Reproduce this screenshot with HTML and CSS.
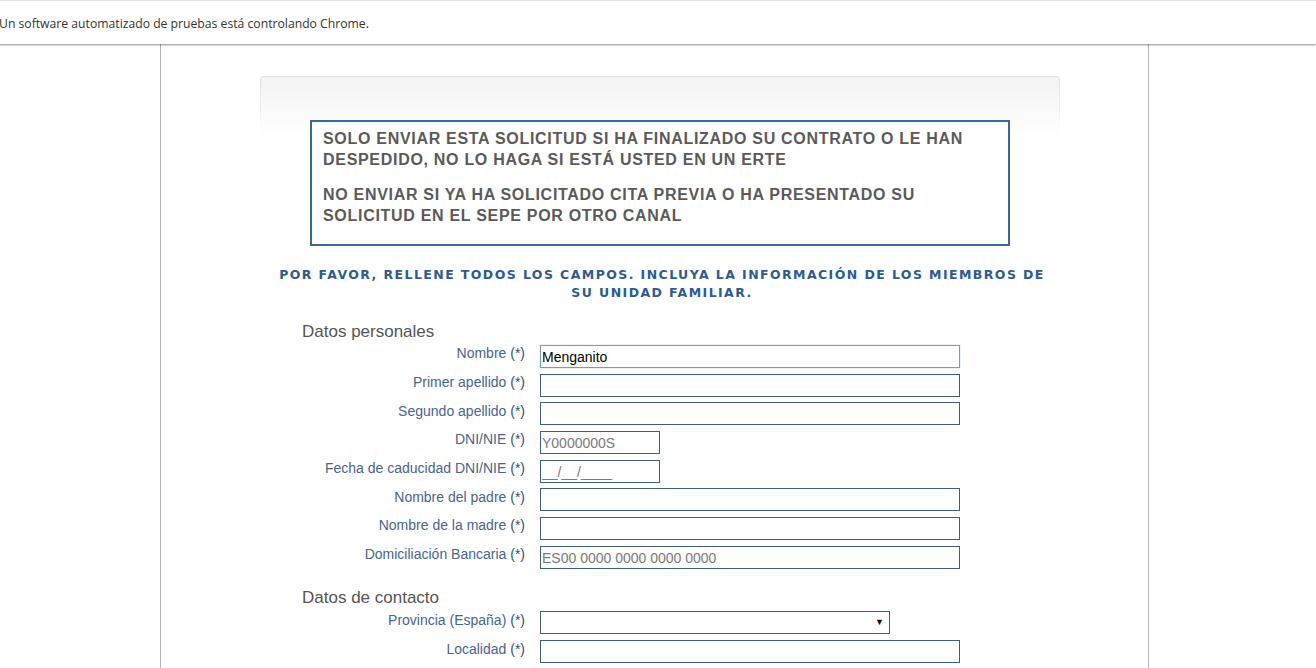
FILE: index.html
```html
<!DOCTYPE html>
<html lang="es">
<head>
<meta charset="utf-8">
<title>Solicitud</title>
<link rel="stylesheet" href="styles.css">
</head>
<body>
<div class="infobar">Un software automatizado de pruebas está controlando Chrome.</div>
<div class="page">
  <div class="panel">
    <div class="warning">
      <p>SOLO ENVIAR ESTA SOLICITUD SI HA FINALIZADO SU CONTRATO O LE HAN DESPEDIDO, NO LO HAGA SI ESTÁ USTED EN UN ERTE</p>
      <p>NO ENVIAR SI YA HA SOLICITADO CITA PREVIA O HA PRESENTADO SU SOLICITUD EN EL SEPE POR OTRO CANAL</p>
    </div>
    <p class="instructions">POR FAVOR, RELLENE TODOS LOS CAMPOS. INCLUYA LA INFORMACIÓN DE LOS MIEMBROS DE SU UNIDAD FAMILIAR.</p>
    <form class="form">
      <h3 class="section">Datos personales</h3>
      <div class="row"><label>Nombre <span class="req">(*)</span></label><input class="field focused" type="text" value="Menganito"></div>
      <div class="row"><label>Primer apellido <span class="req">(*)</span></label><input class="field" type="text"></div>
      <div class="row"><label>Segundo apellido <span class="req">(*)</span></label><input class="field" type="text"></div>
      <div class="row"><label>DNI/NIE <span class="req">(*)</span></label><input class="field short muted" type="text" value="Y0000000S"></div>
      <div class="row"><label>Fecha de caducidad DNI/NIE <span class="req">(*)</span></label><input class="field short muted" type="text" value="__/__/____"></div>
      <div class="row"><label>Nombre del padre <span class="req">(*)</span></label><input class="field" type="text"></div>
      <div class="row"><label>Nombre de la madre <span class="req">(*)</span></label><input class="field" type="text"></div>
      <div class="row"><label>Domiciliación Bancaria <span class="req">(*)</span></label><input class="field muted" type="text" value="ES00 0000 0000 0000 0000"></div>
      <h3 class="section contact">Datos de contacto</h3>
      <div class="row"><label>Provincia (España) <span class="req">(*)</span></label><div class="select"><span class="arrow">▼</span></div></div>
      <div class="row"><label>Localidad <span class="req">(*)</span></label><input class="field" type="text"></div>
    </form>
  </div>
</div>
</body>
</html>
```

FILE: styles.css
```css
html, body {
  margin: 0;
  padding: 0;
  background: #fff;
  overflow: hidden;
}
body {
  font-family: "Liberation Sans", Arial, sans-serif;
  height: 668px;
}
.infobar {
  position: relative;
  z-index: 2;
  height: 44px;
  box-sizing: border-box;
  border-top: 1px solid #e2e2e2;
  background: #fff;
  box-shadow: 0 1px 2px rgba(0,0,0,0.45);
  font-family: "Open Sans", "Noto Sans", sans-serif;
  font-size: 12.2px;
  color: #333;
  line-height: 45px;
  padding-left: 0;
  margin-left: -1px;
  white-space: nowrap;
  overflow: hidden;
}
.page {
  width: 989px;
  margin-left: 160px;
  border-left: 1px solid #b5b5b5;
  border-right: 1px solid #b5b5b5;
  height: 640px;
  padding-top: 32px;
  box-sizing: border-box;
}
.panel {
  width: 800px;
  box-sizing: border-box;
  margin-left: 99px;
  border: 1px solid transparent;
  border-bottom: none;
  border-radius: 4px 4px 0 0;
  background:
    linear-gradient(#f3f3f3, #ffffff 62px) padding-box,
    linear-gradient(#dedede, #ffffff 62px) border-box;
  padding-top: 43px;
}
.warning {
  width: 700px;
  box-sizing: border-box;
  margin: 0 0 0 49px;
  border: 2px solid #3c6796;
  background: #fff;
  padding: 6px 12px 18px 11px;
  font-weight: bold;
  font-size: 16px;
  letter-spacing: 0.7px;
  line-height: 21px;
  color: #5a5a5a;
}
.warning p {
  margin: 0;
}
.warning p + p {
  margin-top: 14px;
}
.instructions {
  margin: 20px 0 0 0;
  padding: 0 6px 0 10px;
  text-align: center;
  font-family: "DejaVu Sans", Verdana, sans-serif;
  font-weight: bold;
  font-size: 12.5px;
  letter-spacing: 1.42px;
  line-height: 18px;
  color: #2f5b8e;
}
.form {
  padding: 19px 0 0 41px;
}
.section {
  margin: 0 0 -1px 0;
  font-weight: normal;
  font-size: 17px;
  line-height: 22px;
  color: #555;
}
.section.contact {
  margin: 15px 0 0 0;
  line-height: 22px;
}
.row {
  display: grid;
  grid-template-columns: 223px auto;
  column-gap: 15px;
  align-items: center;
  height: 28.7px;
}
.row label {
  text-align: right;
  font-size: 14px;
  color: #48658c;
  white-space: nowrap;
  padding-bottom: 6px;
}
.req {
  color: #354f73;
}
.field {
  width: 420px;
  height: 23px;
  box-sizing: border-box;
  border: 1px solid #3c5c80;
  padding: 1px 1px 0 1px;
  font-family: "Liberation Sans", Arial, sans-serif;
  font-size: 14px;
  color: #000;
  background: #fff;
  outline: none;
  margin: 0;
}
.field.short {
  width: 120px;
}
.field.muted {
  color: #7a7a7a;
}
.field.focused {
  border-color: #6b9fd8;
  box-shadow: 0 0 1px #8ab4e6;
}
.select {
  position: relative;
  width: 350px;
  height: 23px;
  box-sizing: border-box;
  border: 1px solid #3c5c80;
  background: #fff;
}
.arrow {
  position: absolute;
  right: 5px;
  top: 5px;
  font-size: 9px;
  color: #111;
}
```
